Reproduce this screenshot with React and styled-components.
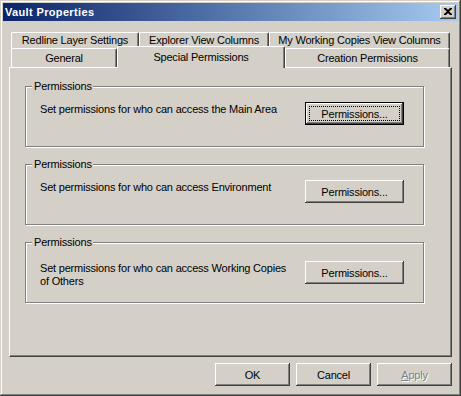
import styled, { createGlobalStyle, css } from 'styled-components'

const GlobalStyle = createGlobalStyle`
    html, body {
        margin: 0;
        padding: 0;
        background: #d4d0c8;
    }
    body {
        font-family: "Liberation Sans", Arial, sans-serif;
        font-size: 11px;
        letter-spacing: -0.2px;
        color: #000;
    }
`

const raised = css`
    box-shadow:
        inset -1px -1px 0 #404040,
        inset 1px 1px 0 #fff,
        inset -2px -2px 0 #808080,
        inset 2px 2px 0 #d4d0c8;
`

const groups = [
    { text: 'Set permissions for who can access the Main Area', isDefault: true, top: 15 },
    { text: 'Set permissions for who can access Environment', top: 15 },
    { text: 'Set permissions for who can access Working Copies of Others', top: 18 },
]

function App() {
    return (
        <>
            <GlobalStyle />
            <Window>
                <TitleBar>
                    <Title>Vault Properties</Title>
                    <CloseButton>
                        <svg width="8" height="7" viewBox="0 0 8 7">
                            <path d="M0 0h2l2 2 2-2h2v1L5 3.5 8 6v1H6L4 5 2 7H0V6l3-2.5L0 1z" fill="#000" />
                        </svg>
                    </CloseButton>
                </TitleBar>

                <Body>
                    <TabRow>
                        <Tab $width={128}>Redline Layer Settings</Tab>
                        <Tab $width={130}>Explorer View Columns</Tab>
                        <Tab $width={181}>My Working Copies View Columns</Tab>
                    </TabRow>
                    <TabRow $second>
                        <Tab $width={106} $second>General</Tab>
                        <Tab $width={168} $second $active>Special Permissions</Tab>
                        <Tab $width={165} $second>Creation Permissions</Tab>
                    </TabRow>

                    <Panel>
                        {groups.map((g, i) => (
                            <Group key={i} $top={g.top}>
                                <Legend>Permissions</Legend>
                                <GroupText>{g.text}</GroupText>
                                <Button $wide $default={g.isDefault}>Permissions...</Button>
                            </Group>
                        ))}
                    </Panel>

                    <ButtonRow>
                        <Button>OK</Button>
                        <Button>Cancel</Button>
                        <Button disabled>
                            <u>A</u>pply
                        </Button>
                    </ButtonRow>
                </Body>
            </Window>
        </>
    )
}

const Window = styled.div`
    width: 461px;
    height: 396px;
    box-sizing: border-box;
    padding: 3px;
    background: #d4d0c8;
    display: flex;
    flex-direction: column;
    box-shadow:
        inset -1px -1px 0 #404040,
        inset 1px 1px 0 #d4d0c8,
        inset -2px -2px 0 #808080,
        inset 2px 2px 0 #fff;
`

const TitleBar = styled.div`
    height: 18px;
    display: flex;
    align-items: center;
    justify-content: space-between;
    padding: 0 2px 0 2px;
    background: linear-gradient(90deg, #0a246a 0%, #a6caf0 100%);
`

const Title = styled.span`
    color: #fff;
    font-weight: bold;
    font-size: 11px;
    letter-spacing: 0.35px;
`

const CloseButton = styled.div`
    width: 16px;
    height: 14px;
    background: #d4d0c8;
    display: flex;
    align-items: center;
    justify-content: center;
    ${raised}
    svg {
        display: block;
        margin-top: -1px;
    }
`

const Body = styled.div`
    flex: 1;
    display: flex;
    flex-direction: column;
    padding: 0 6px;
`

const TabRow = styled.div`
    display: flex;
    padding-left: 2px;
    height: ${p => (p.$second ? 19 : 16)}px;
    margin-top: ${p => (p.$second ? 0 : 11)}px;
    align-items: flex-start;
    position: relative;
    z-index: ${p => (p.$second ? 2 : 1)};
`

const Tab = styled.div`
    box-sizing: border-box;
    width: ${p => p.$width}px;
    height: ${p => (p.$active ? 22 : p.$second ? 19 : 17)}px;
    margin-top: ${p => (p.$active ? -2 : 0)}px;
    padding-top: ${p => (p.$active ? 4 : p.$second ? 3 : 1)}px;
    background: #d4d0c8;
    border-left: 1px solid #fff;
    border-top: 1px solid #fff;
    border-right: 1px solid #404040;
    border-radius: 2px 2px 0 0;
    box-shadow: inset -1px 0 0 #808080;
    text-align: center;
    white-space: nowrap;
    line-height: 13px;
    position: relative;
    z-index: ${p => (p.$active ? 3 : 1)};
`

const Panel = styled.div`
    box-sizing: border-box;
    height: 290px;
    padding: 18px 14px 0 15px;
    background: #d4d0c8;
    border-left: 1px solid #fff;
    border-top: 1px solid #fff;
    border-right: 1px solid #404040;
    border-bottom: 1px solid #404040;
    box-shadow: inset -1px -1px 0 #808080;
    display: flex;
    flex-direction: column;
    gap: 17px;
`

const Group = styled.div`
    position: relative;
    box-sizing: border-box;
    width: 399px;
    height: 61px;
    border: 1px solid #808080;
    box-shadow: inset 1px 1px 0 #fff, 1px 1px 0 #fff;
    padding: ${p => p.$top}px 19px 0 14px;
    display: flex;
    align-items: flex-start;
    justify-content: space-between;
`

const Legend = styled.span`
    position: absolute;
    top: -7px;
    left: 6px;
    padding: 0 1px 0 2px;
    background: #d4d0c8;
    line-height: 13px;
`

const GroupText = styled.div`
    width: 256px;
    line-height: 13px;
    padding-top: 1px;
`

const Button = styled.button`
    position: relative;
    box-sizing: border-box;
    width: ${p => (p.$wide ? 99 : 75)}px;
    height: 23px;
    padding: 0;
    border: none;
    background: #d4d0c8;
    font-family: "Liberation Sans", Arial, sans-serif;
    font-size: 11px;
    letter-spacing: -0.2px;
    color: #000;
    ${raised}

    &:disabled {
        color: #808080;
        text-shadow: 1px 1px 0 #fff;
    }

    ${p => p.$default && css`
        box-shadow:
            inset 0 0 0 1px #000,
            inset -2px -2px 0 #404040,
            inset 2px 2px 0 #fff,
            inset -3px -3px 0 #808080;
        &::after {
            content: '';
            position: absolute;
            inset: 4px;
            border: 1px dotted #000;
        }
    `}
`

const ButtonRow = styled.div`
    display: flex;
    justify-content: flex-end;
    gap: 6px;
    margin-top: 6px;
`

export default App
